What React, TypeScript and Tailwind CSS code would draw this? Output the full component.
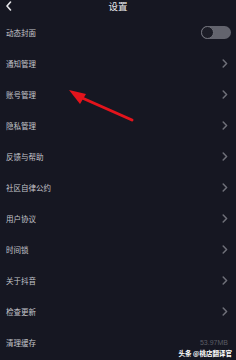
import React from "react";

const items = [
  "通知管理",
  "账号管理",
  "隐私管理",
  "反馈与帮助",
  "社区自律公约",
  "用户协议",
  "时间锁",
  "关于抖音",
  "检查更新",
];

function Chevron() {
  return (
    <svg width="6" height="9" viewBox="0 0 6 9" className="mr-[2px]">
      <path d="M1.2 1 L4.6 4.5 L1.2 8" fill="none" stroke="#6f7079" strokeWidth="1.5" strokeLinecap="round" strokeLinejoin="round" />
    </svg>
  );
}

export default function App() {
  return (
    <div
      className="relative w-[236px] h-[360px] overflow-hidden bg-[#161722] text-[#c4c5cb]"
      style={{ fontFamily: '"Noto Sans CJK SC", "Noto Sans", sans-serif' }}
    >
      <div className="relative h-[17px] flex justify-center items-start">
        <svg width="8" height="10" viewBox="0 0 8 10" className="absolute left-[5px] top-[1px]">
          <path d="M5.5 1 L2 5 L5.5 9" fill="none" stroke="#e6e6ea" strokeWidth="1.6" strokeLinecap="round" strokeLinejoin="round" />
        </svg>
        <span className="text-[9.5px] leading-[12px] text-[#e8e8ec]">设置</span>
      </div>

      <div className="flex flex-col">
        <div className="h-[31px] pl-[6px] pr-[5px] flex items-center justify-between">
          <span className="text-[7.5px] leading-none">动态封面</span>
          <div className="relative w-[30px] h-[13px] rounded-full bg-[#63646e]">
            <div className="absolute left-0 top-0 w-[13px] h-[13px] rounded-full bg-[#1c1d27] border border-[#70717a]" />
          </div>
        </div>
        {items.map((t) => (
          <div key={t} className="h-[31px] px-[6px] flex items-center justify-between">
            <span className="text-[7.5px] leading-none">{t}</span>
            <Chevron />
          </div>
        ))}
        <div className="h-[31px] px-[6px] flex items-center justify-between">
          <span className="text-[7.5px] leading-none">清理缓存</span>
          <span
            className="text-[7px] leading-none text-[#5c5d66] mr-[2px]"
            style={{ fontFamily: '"Liberation Sans", sans-serif' }}
          >
            53.97MB
          </span>
        </div>
      </div>

      <svg
        className="absolute left-0 top-0"
        width="236"
        height="360"
        viewBox="0 0 236 360"
      >
        <line x1="132" y1="120" x2="80" y2="97" stroke="#e3141c" strokeWidth="3" strokeLinecap="round" />
        <polygon points="69,90 86,94 80,104" fill="#e3141c" />
      </svg>

      <div className="absolute right-[4px] bottom-[4px] text-[6.5px] leading-none font-bold text-white">
        头条 @桃店翻译官
      </div>
    </div>
  );
}
